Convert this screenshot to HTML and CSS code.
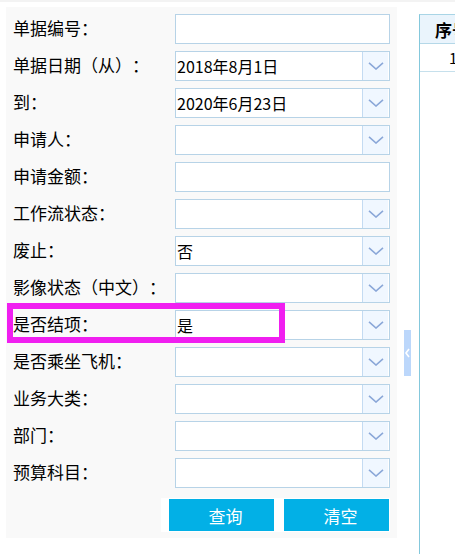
FILE: index.html
```html
<!DOCTYPE html>
<html lang="zh">
<head>
<meta charset="utf-8">
<link rel="stylesheet" href="styles.css">
</head>
<body>
<div class="page">
  <div class="panel">
    <div class="form">
      <div class="row"><span class="label">单据编号：</span><div class="field"><span class="val"></span></div></div>
      <div class="row"><span class="label">单据日期（从）：</span><div class="field"><span class="val">2018年8月1日</span><span class="btn"><svg width="16" height="8" viewBox="0 0 16 8"><polyline points="1,0.8 8,7 15,0.8" fill="none" stroke="#8aa7d8" stroke-width="1.6"/></svg></span></div></div>
      <div class="row"><span class="label">到：</span><div class="field"><span class="val">2020年6月23日</span><span class="btn"><svg width="16" height="8" viewBox="0 0 16 8"><polyline points="1,0.8 8,7 15,0.8" fill="none" stroke="#8aa7d8" stroke-width="1.6"/></svg></span></div></div>
      <div class="row"><span class="label">申请人：</span><div class="field"><span class="val"></span><span class="btn"><svg width="16" height="8" viewBox="0 0 16 8"><polyline points="1,0.8 8,7 15,0.8" fill="none" stroke="#8aa7d8" stroke-width="1.6"/></svg></span></div></div>
      <div class="row"><span class="label">申请金额：</span><div class="field"><span class="val"></span></div></div>
      <div class="row"><span class="label">工作流状态：</span><div class="field"><span class="val"></span><span class="btn"><svg width="16" height="8" viewBox="0 0 16 8"><polyline points="1,0.8 8,7 15,0.8" fill="none" stroke="#8aa7d8" stroke-width="1.6"/></svg></span></div></div>
      <div class="row"><span class="label">废止：</span><div class="field"><span class="val">否</span><span class="btn"><svg width="16" height="8" viewBox="0 0 16 8"><polyline points="1,0.8 8,7 15,0.8" fill="none" stroke="#8aa7d8" stroke-width="1.6"/></svg></span></div></div>
      <div class="row"><span class="label">影像状态（中文）：</span><div class="field"><span class="val"></span><span class="btn"><svg width="16" height="8" viewBox="0 0 16 8"><polyline points="1,0.8 8,7 15,0.8" fill="none" stroke="#8aa7d8" stroke-width="1.6"/></svg></span></div></div>
      <div class="row marked"><span class="label">是否结项：</span><div class="field"><span class="val">是</span><span class="btn"><svg width="16" height="8" viewBox="0 0 16 8"><polyline points="1,0.8 8,7 15,0.8" fill="none" stroke="#8aa7d8" stroke-width="1.6"/></svg></span></div><div class="mark"></div></div>
      <div class="row"><span class="label">是否乘坐飞机：</span><div class="field"><span class="val"></span><span class="btn"><svg width="16" height="8" viewBox="0 0 16 8"><polyline points="1,0.8 8,7 15,0.8" fill="none" stroke="#8aa7d8" stroke-width="1.6"/></svg></span></div></div>
      <div class="row"><span class="label">业务大类：</span><div class="field"><span class="val"></span><span class="btn"><svg width="16" height="8" viewBox="0 0 16 8"><polyline points="1,0.8 8,7 15,0.8" fill="none" stroke="#8aa7d8" stroke-width="1.6"/></svg></span></div></div>
      <div class="row"><span class="label">部门：</span><div class="field"><span class="val"></span><span class="btn"><svg width="16" height="8" viewBox="0 0 16 8"><polyline points="1,0.8 8,7 15,0.8" fill="none" stroke="#8aa7d8" stroke-width="1.6"/></svg></span></div></div>
      <div class="row"><span class="label">预算科目：</span><div class="field"><span class="val"></span><span class="btn"><svg width="16" height="8" viewBox="0 0 16 8"><polyline points="1,0.8 8,7 15,0.8" fill="none" stroke="#8aa7d8" stroke-width="1.6"/></svg></span></div></div>
    </div>
    <div class="actions">
      <button class="action">查询</button>
      <button class="action">清空</button>
    </div>
  </div>
  <div class="toggle"><svg width="7" height="12" viewBox="0 0 7 12"><polyline points="5,2 2,6 5,10" fill="none" stroke="#ffffff" stroke-width="1.6"/></svg></div>
  <div class="grid">
    <div class="grid-head"><span class="cell">序号</span></div>
    <div class="grid-row"><span class="cell">1</span></div>
  </div>
</div>
</body>
</html>
```
FILE: styles.css
```css
html, body {
  margin: 0;
  padding: 0;
  background: #ffffff;
}
body {
  font-family: "Noto Sans CJK SC", "Noto Sans", sans-serif;
  font-size: 17px;
  color: #000;
  width: 455px;
  height: 554px;
  overflow: hidden;
  text-spacing-trim: space-all;
}
.page {
  display: flex;
  align-items: flex-start;
  padding-top: 5px;
  padding-left: 6px;
  height: 552px;
  border-top: 2px solid #f3f3f3;
  box-sizing: border-box;
}
.panel {
  width: 391px;
  height: 531px;
  background: #f9f9f9;
  display: flex;
  flex-direction: column;
  flex-shrink: 0;
}
.form {
  display: flex;
  flex-direction: column;
  gap: 7px;
  padding-top: 7px;
}
.row {
  display: flex;
  align-items: center;
  height: 30px;
  position: relative;
}
.label {
  width: 169px;
  flex-shrink: 0;
  padding-left: 7px;
  box-sizing: border-box;
  font-size: 17px;
  line-height: 20px;
  margin-top: -3px;
  white-space: nowrap;
  text-spacing-trim: space-all;
}
.field {
  width: 215px;
  height: 30px;
  flex-shrink: 0;
  box-sizing: border-box;
  border: 1px solid #b7d3e7;
  background: #ffffff;
  display: flex;
}
.val {
  flex: 1;
  padding-left: 1px;
  font-size: 16px;
  line-height: 28px;
  white-space: nowrap;
  overflow: hidden;
}
.btn {
  width: 26px;
  height: 28px;
  box-sizing: border-box;
  border-left: 1px solid #c4dbf2;
  background: #f0f7ff;
  display: flex;
  align-items: center;
  justify-content: center;
  margin-right: 1px;
}
.mark {
  position: absolute;
  left: 1px;
  top: -7px;
  width: 278px;
  height: 40px;
  box-sizing: border-box;
  border: 6px solid #f01ff0;
  pointer-events: none;
}
.actions {
  display: flex;
  gap: 10px;
  margin-top: 10px;
  margin-left: 155px;
  width: 229px;
  padding: 1px 1px 1px 8px;
  box-sizing: border-box;
  background: #ffffff;
}
.action {
  width: 105px;
  height: 32px;
  border: none;
  background: #02b0e6;
  color: #ffffff;
  font-family: "Noto Sans CJK SC", sans-serif;
  font-size: 17px;
  padding: 0 0 0 8px;
  margin: 0;
}
.toggle {
  width: 7px;
  height: 46px;
  margin-top: 323px;
  margin-left: 7px;
  background: #bcd7fb;
  display: flex;
  align-items: center;
  justify-content: center;
  flex-shrink: 0;
}
.grid {
  margin-left: 8px;
  margin-top: 7px;
  flex: 1;
  height: 547px;
  border-left: 1px solid #84c8dc;
  border-top: 1px solid #a9d5e6;
  background: #ffffff;
}
.grid-head {
  height: 28px;
  background: #eaf4fc;
  border-bottom: 1px solid #b5d8e8;
  display: flex;
  align-items: center;
}
.grid-head .cell {
  font-weight: bold;
  padding-left: 15px;
  white-space: nowrap;
  font-size: 17px;
}
.grid-row {
  height: 27px;
  border-bottom: 1px solid #c6e0ec;
  display: flex;
  align-items: center;
}
.grid-row .cell {
  padding-left: 29px;
  font-size: 15px;
}
```
